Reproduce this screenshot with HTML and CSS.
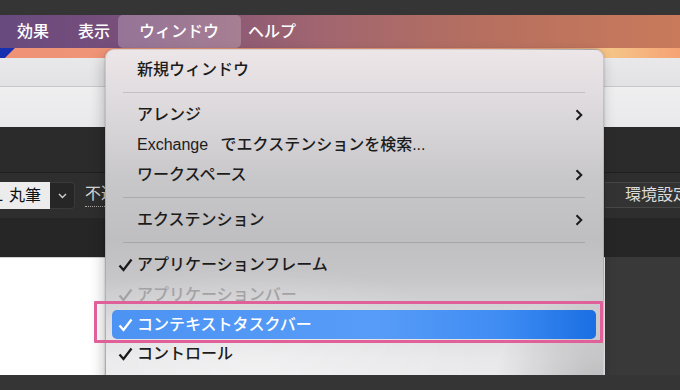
FILE: index.html
```html
<!DOCTYPE html>
<html lang="ja">
<head>
<meta charset="utf-8">
<link rel="stylesheet" href="styles.css">
</head>
<body>
<div class="screen">
  <div class="menubar">
    <span class="mb mb-effects">効果</span>
    <span class="mb mb-view">表示</span>
    <span class="mb mb-active">ウィンドウ</span>
    <span class="mb mb-help">ヘルプ</span>
  </div>
  <div class="band"></div>
  <div class="strip1"></div>
  <div class="strip2"></div>
  <div class="dark1"></div>
  <div class="toolbar">
    <div class="tb-left">
      <div class="brush-field"><span class="cut">L</span>丸筆</div>
      <div class="dd-btn">
        <svg width="9" height="6" viewBox="0 0 9 6"><path d="M1 1 L4.5 4.5 L8 1" fill="none" stroke="#d0d0d0" stroke-width="1.4"/></svg>
      </div>
      <span class="opacity">不透明度</span>
    </div>
    <div class="pref">環境設定</div>
  </div>
  <div class="dark2"></div>
  <div class="canvas-row">
    <div class="canvas"></div>
    <div class="panel"></div>
  </div>

  <div class="menu">
    <div class="item"><span class="chk"></span><span class="label">新規ウィンドウ</span></div>
    <div class="sep"></div>
    <div class="item"><span class="chk"></span><span class="label">アレンジ</span>
      <svg class="arrow" width="8" height="12" viewBox="0 0 8 12"><path d="M1.5 1.2 L6.3 6 L1.5 10.8" fill="none" stroke="#1a1a1a" stroke-width="2"/></svg></div>
    <div class="item"><span class="chk"></span><span class="label"><span class="latin">Exchange</span> でエクステンションを検索...</span></div>
    <div class="item"><span class="chk"></span><span class="label">ワークスペース</span>
      <svg class="arrow" width="8" height="12" viewBox="0 0 8 12"><path d="M1.5 1.2 L6.3 6 L1.5 10.8" fill="none" stroke="#1a1a1a" stroke-width="2"/></svg></div>
    <div class="sep"></div>
    <div class="item"><span class="chk"></span><span class="label">エクステンション</span>
      <svg class="arrow" width="8" height="12" viewBox="0 0 8 12"><path d="M1.5 1.2 L6.3 6 L1.5 10.8" fill="none" stroke="#1a1a1a" stroke-width="2"/></svg></div>
    <div class="sep"></div>
    <div class="item"><span class="chk"><svg width="15" height="14" viewBox="0 0 15 14"><path d="M1.5 7.5 L5.5 12 L13.5 1.5" fill="none" stroke="#1a1a1a" stroke-width="2.3"/></svg></span><span class="label">アプリケーションフレーム</span></div>
    <div class="item disabled"><span class="chk"><svg width="15" height="14" viewBox="0 0 15 14"><path d="M1.5 7.5 L5.5 12 L13.5 1.5" fill="none" stroke="#a3a2a5" stroke-width="2.3"/></svg></span><span class="label">アプリケーションバー</span></div>
    <div class="item selected"><span class="chk"><svg width="15" height="14" viewBox="0 0 15 14"><path d="M1.5 7.5 L5.5 12 L13.5 1.5" fill="none" stroke="#ffffff" stroke-width="2.3"/></svg></span><span class="label">コンテキストタスクバー</span></div>
    <div class="item"><span class="chk"><svg width="15" height="14" viewBox="0 0 15 14"><path d="M1.5 7.5 L5.5 12 L13.5 1.5" fill="none" stroke="#1a1a1a" stroke-width="2.3"/></svg></span><span class="label">コントロール</span></div>
  </div>
  <div class="annot"></div>
</div>
</body>
</html>
```

FILE: styles.css
```css
* { box-sizing: border-box; }
html, body {
  margin: 0;
  padding: 0;
}
body {
  width: 680px;
  height: 390px;
  overflow: hidden;
  background: #353535;
  font-family: "Liberation Sans", "Noto Sans CJK JP", sans-serif;
}
.screen {
  position: relative;
  margin-top: 15px;
  height: 360px;
  overflow: hidden;
  display: flex;
  flex-direction: column;
}
.menubar {
  height: 33px;
  flex: none;
  display: flex;
  align-items: stretch;
  background: linear-gradient(90deg, #684a7f 0%, #7c5079 22%, #a2666f 48%, #b7705f 72%, #c97a5b 100%);
  color: #ffffff;
  font-size: 16px;
  font-weight: 500;
}
.mb {
  display: flex;
  align-items: center;
  line-height: 1;
}
.mb-effects { margin-left: 17px; }
.mb-view { margin-left: 29px; }
.mb-active {
  margin-left: 8px;
  padding: 0 22px 0 21px;
  border-radius: 5px;
  background: rgba(255, 255, 255, 0.22);
}
.mb-help { margin-left: 7px; }

.band {
  height: 10px;
  flex: none;
  background:
    linear-gradient(135deg, #1630b0 0, #1630b0 10px, transparent 11px),
    linear-gradient(90deg, #ef9276 0%, #f19a78 55%, #f1a27d 80%, #f5c487 90%, #f6a274 100%);
}
.strip1 {
  height: 28px;
  flex: none;
  background: linear-gradient(180deg, #e9e9eb, #e2e2e4);
}
.strip2 {
  height: 41px;
  flex: none;
  border-top: 1px solid #c8c8ca;
  background: linear-gradient(180deg, #efeff0, #e9e9eb);
}
.dark1 {
  height: 45px;
  flex: none;
  background: #2b2b2b;
}
.toolbar {
  height: 46px;
  flex: none;
  border-top: 1px solid #1f1f1f;
  background: #2e2e2e;
  display: flex;
  justify-content: space-between;
  align-items: flex-start;
}
.tb-left {
  display: flex;
  align-items: flex-start;
  margin-top: 9px;
}
.brush-field {
  width: 50px;
  height: 27px;
  background: #ececec;
  color: #111;
  font-size: 16px;
  line-height: 27px;
  white-space: nowrap;
  overflow: hidden;
  text-indent: -6px;
}
.cut { margin-right: 6px; }
.dd-btn {
  width: 25px;
  height: 27px;
  background: #262626;
  border: 1px solid #3a3a3a;
  border-left: none;
  border-radius: 0 4px 4px 0;
  display: flex;
  align-items: center;
  justify-content: center;
}
.opacity {
  margin-left: 10px;
  color: #d6d6d6;
  font-size: 16px;
  line-height: 24px;
  border-bottom: 1px dotted #a8a8a8;
  white-space: nowrap;
}
.pref {
  margin-top: 9px;
  width: 75px;
  height: 26px;
  padding-left: 20px;
  background: #333333;
  border-top: 1px solid #474747;
  border-bottom: 1px solid #474747;
  color: #dcdcdc;
  font-size: 16px;
  line-height: 24px;
  white-space: nowrap;
  overflow: hidden;
}
.dark2 {
  height: 39px;
  flex: none;
  background: #262626;
}
.canvas-row {
  height: 118px;
  flex: none;
  display: flex;
}
.canvas {
  flex: 1;
  background: #ffffff;
  border-top: 1px solid #cfcfcf;
}
.panel {
  width: 75px;
  background: #393939;
}

.menu {
  position: absolute;
  left: 105px;
  top: 34px;
  width: 499px;
  height: 345px;
  padding-top: 5px;
  border-radius: 9px 9px 0 0;
  border: 1px solid rgba(0, 0, 0, 0.12);
  background:
    radial-gradient(ellipse 22% 30% at 100% 100%, rgba(0, 0, 0, 0.22), rgba(0, 0, 0, 0)),
    radial-gradient(ellipse 45% 30% at 30% 92%, rgba(255, 255, 255, 0.35), rgba(255, 255, 255, 0)),
    linear-gradient(180deg, #ece6e8 0%, #e2dde0 12%, #d5d3d5 25%, #c7c6c8 38%, #bfbec0 55%, #c6c5c7 66%, #d8d7d9 78%, #e8e7e9 90%, #edecee 100%);
  box-shadow: 0 0 2px rgba(0, 0, 0, 0.25), -2px 6px 14px rgba(0, 0, 0, 0.22);
  color: #1c1c1c;
  font-size: 16px;
  font-weight: 500;
}
.item {
  height: 30px;
  display: flex;
  align-items: center;
  padding-left: 6px;
  padding-right: 14px;
  margin: 0 6px;
  border-radius: 5px;
  white-space: nowrap;
}
.chk {
  width: 19px;
  flex: none;
  display: flex;
  align-items: center;
}
.label {
  flex: 1;
  line-height: 1;
}
.latin { margin-right: 8px; }
.arrow { flex: none; }
.sep {
  height: 15px;
  margin: 0 18px 0 17px;
  display: flex;
  align-items: center;
}
.sep::before {
  content: "";
  display: block;
  width: 100%;
  height: 1px;
  margin-top: -1px;
  background: rgba(0, 0, 0, 0.13);
}
.disabled { color: #a3a2a5; }
.selected {
  height: 29px;
  margin-right: 7px;
  padding-right: 13px;
  color: #ffffff;
  background: linear-gradient(90deg, #4d93f3 0%, #579cf7 55%, #3f8cf4 80%, #1b6fe3 100%);
}
.annot {
  position: absolute;
  left: 94px;
  top: 286px;
  width: 509px;
  height: 42px;
  border: 3px solid #e0619a;
  border-radius: 1px;
}
```
